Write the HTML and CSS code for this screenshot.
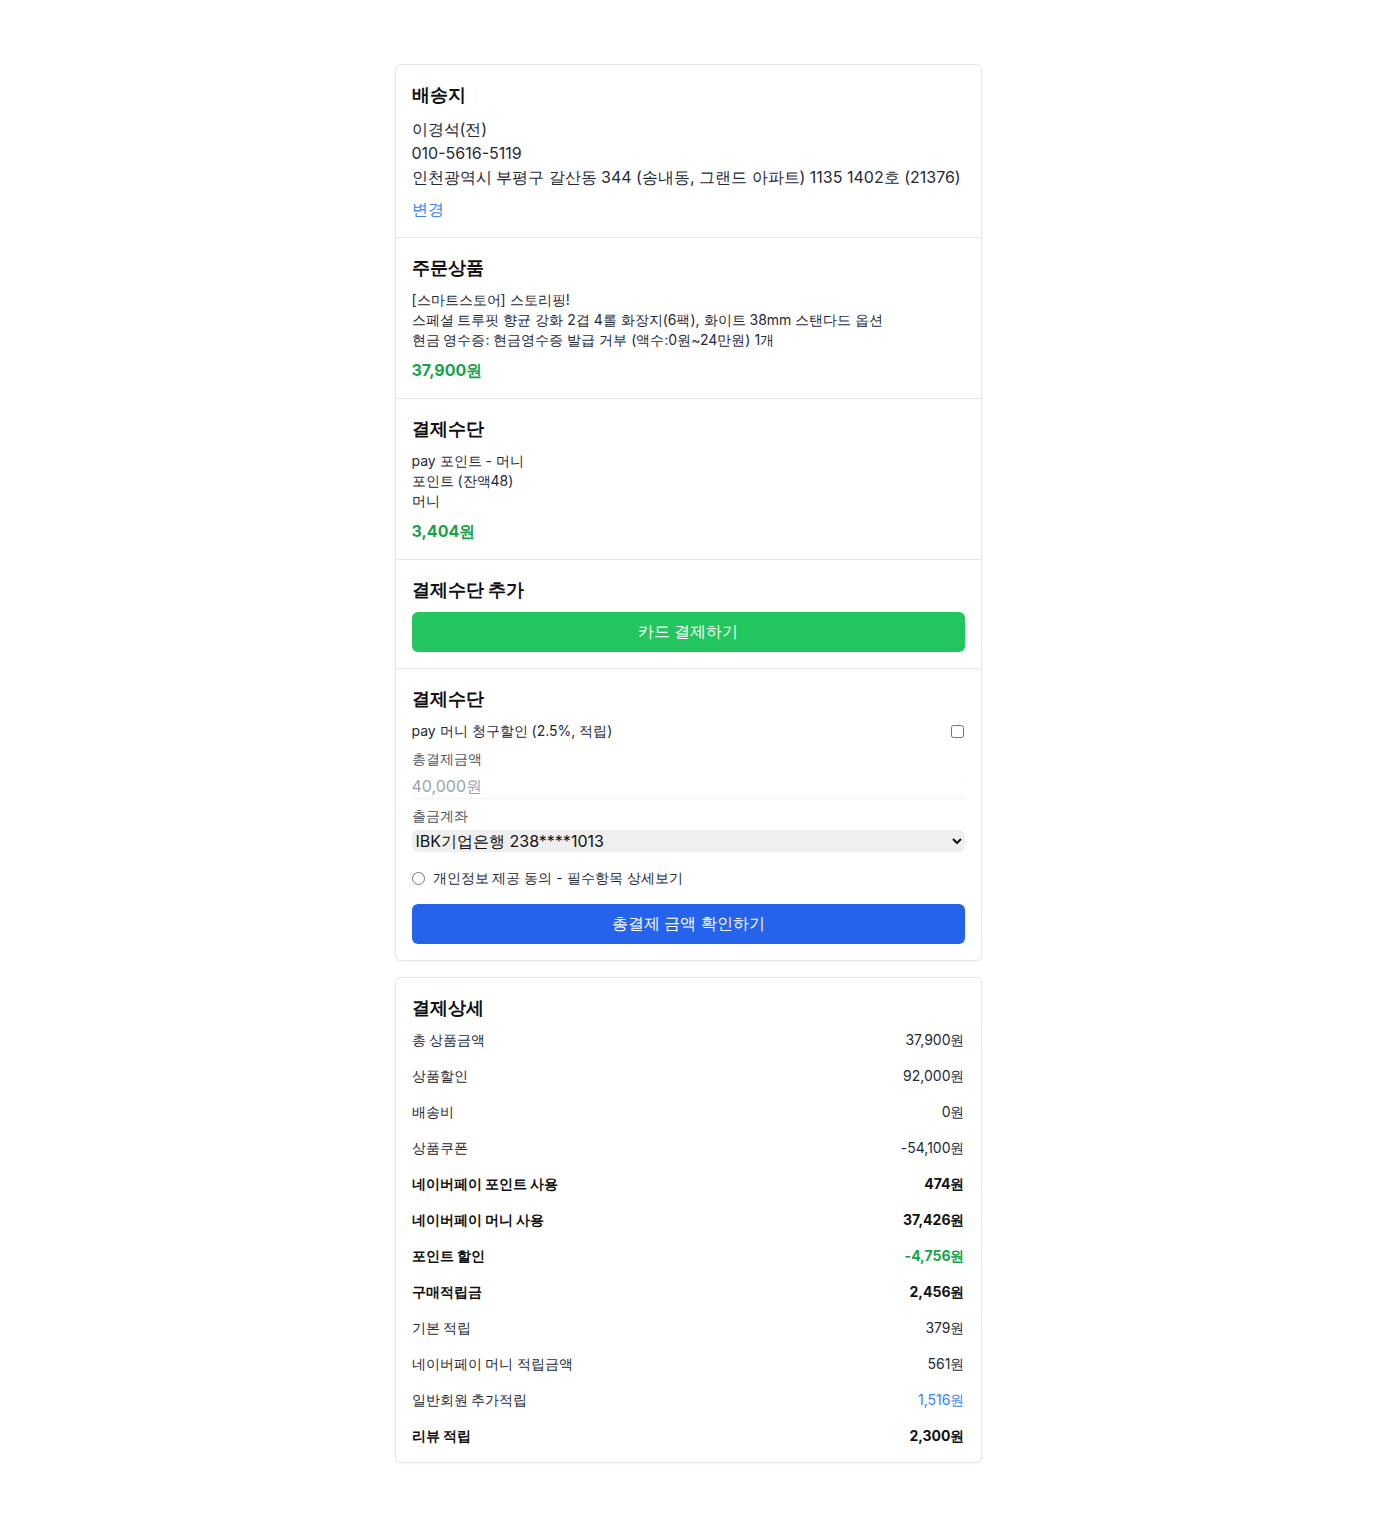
FILE: index.html
```html
<!DOCTYPE html>
<html lang="ko">
<head>
<meta charset="utf-8">
<title>주문/결제</title>
<link rel="stylesheet" href="styles.css">
</head>
<body>
<main class="page">
  <div class="card">
    <section class="sec">
      <h2 class="title">배송지</h2>
      <p class="line16">이경석(전)</p>
      <p class="line16">010-5616-5119</p>
      <p class="line16">인천광역시 부평구 갈산동 344 (송내동, 그랜드 아파트) 1135 1402호 (21376)</p>
      <a class="link">변경</a>
    </section>
    <section class="sec">
      <h2 class="title">주문상품</h2>
      <p class="line14">[스마트스토어] 스토리핑!</p>
      <p class="line14">스페셜 트루핏 향균 강화 2겹 4롤 화장지(6팩), 화이트 38mm 스탠다드 옵션</p>
      <p class="line14">현금 영수증: 현금영수증 발급 거부 (액수:0원~24만원) 1개</p>
      <p class="price">37,900원</p>
    </section>
    <section class="sec">
      <h2 class="title">결제수단</h2>
      <p class="line14">pay 포인트 - 머니</p>
      <p class="line14">포인트 (잔액48)</p>
      <p class="line14">머니</p>
      <p class="price">3,404원</p>
    </section>
    <section class="sec">
      <h2 class="title">결제수단 추가</h2>
      <button class="btn btn-green">카드 결제하기</button>
    </section>
    <section class="sec">
      <h2 class="title">결제수단</h2>
      <label class="check-row">
        <span>pay 머니 청구할인 (2.5%, 적립)</span>
        <input type="checkbox" class="chk">
      </label>
      <p class="field-label">총결제금액</p>
      <input class="amount" type="text" placeholder="40,000원">
      <p class="field-label">출금계좌</p>
      <select class="account">
        <option>IBK기업은행 238****1013</option>
      </select>
      <label class="radio-row">
        <input type="radio" class="rad">
        <span>개인정보 제공 동의 - 필수항목 상세보기</span>
      </label>
      <button class="btn btn-blue">총결제 금액 확인하기</button>
    </section>
  </div>

  <div class="card card-detail">
    <h2 class="title">결제상세</h2>
    <ul class="rows">
      <li class="row"><span>총 상품금액</span><span>37,900원</span></li>
      <li class="row"><span>상품할인</span><span>92,000원</span></li>
      <li class="row"><span>배송비</span><span>0원</span></li>
      <li class="row"><span>상품쿠폰</span><span>-54,100원</span></li>
      <li class="row bold"><span>네이버페이 포인트 사용</span><span>474원</span></li>
      <li class="row bold"><span>네이버페이 머니 사용</span><span>37,426원</span></li>
      <li class="row bold"><span>포인트 할인</span><span class="green">-4,756원</span></li>
      <li class="row bold"><span>구매적립금</span><span>2,456원</span></li>
      <li class="row"><span>기본 적립</span><span>379원</span></li>
      <li class="row"><span>네이버페이 머니 적립금액</span><span>561원</span></li>
      <li class="row"><span>일반회원 추가적립</span><span class="blue">1,516원</span></li>
      <li class="row bold"><span>리뷰 적립</span><span>2,300원</span></li>
    </ul>
  </div>
</main>
</body>
</html>
```

FILE: styles.css
```css
* { box-sizing: border-box; }
html, body { margin: 0; padding: 0; background: #fff; }
body {
  font-family: Inter, sans-serif;
  color: #111827;
}
p, h2, ul { margin: 0; padding: 0; }
.page {
  width: 587px;
  margin: 0 auto;
  padding: 64px 0;
  display: flex;
  flex-direction: column;
  gap: 16px;
}
.card {
  border: 1px solid #e5e7eb;
  border-radius: 6px;
  background: #fff;
  box-shadow: 0 1px 2px rgba(0,0,0,0.05);
}
.sec {
  padding: 16px;
  border-bottom: 1px solid #e5e7eb;
}
.sec:last-child { border-bottom: none; }
.title {
  font-size: 18px;
  line-height: 28px;
  font-weight: 700;
  margin-bottom: 8px;
  color: #111;
}
.line16 { font-size: 16px; line-height: 24px; color: #1f2937; }
.line14 { font-size: 14px; line-height: 20px; color: #1f2937; }
.link {
  display: block;
  margin-top: 8px;
  font-size: 16px;
  line-height: 24px;
  color: #3b82f6;
  cursor: pointer;
}
.price {
  margin-top: 8px;
  font-size: 16px;
  line-height: 24px;
  font-weight: 700;
  color: #16a34a;
}
.btn {
  display: block;
  width: 100%;
  height: 40px;
  border: none;
  border-radius: 6px;
  color: #fff;
  font-family: inherit;
  font-size: 16px;
  cursor: pointer;
}
.btn-green { background: #22c55e; }
.btn-blue { background: #2563eb; margin-top: 16px; }
.check-row {
  display: flex;
  justify-content: space-between;
  align-items: center;
  font-size: 14px;
  line-height: 20px;
  color: #1f2937;
}
.chk { margin: 0 1px 0 0; width: 13px; height: 13px; }
.field-label {
  margin-top: 8px;
  font-size: 14px;
  line-height: 20px;
  color: #4b5563;
}
.amount {
  display: block;
  width: 100%;
  margin-top: 4px;
  height: 25px;
  border: none;
  border-radius: 6px;
  padding: 0;
  font-family: inherit;
  font-size: 16px;
  line-height: 24px;
  box-shadow: 0 1px 2px rgba(0,0,0,0.06);
  outline: none;
}
.amount::placeholder { color: #9ca3af; }
.account {
  display: block;
  width: 100%;
  margin-top: 4px;
  height: 22px;
  border: none;
  border-radius: 6px;
  background: #efefef;
  font-family: inherit;
  font-size: 16px;
  color: #111;
  padding: 0;
}
.radio-row {
  margin-top: 16px;
  display: flex;
  align-items: center;
  gap: 8px;
  font-size: 14px;
  line-height: 20px;
  color: #1f2937;
}
.rad { margin: 0; width: 13px; height: 13px; }
.card-detail { padding: 16px; }
.rows { list-style: none; display: flex; flex-direction: column; gap: 16px; }
.row {
  display: flex;
  justify-content: space-between;
  font-size: 14px;
  line-height: 20px;
  color: #1f2937;
}
.row.bold { font-weight: 700; color: #111; }
.green { color: #16a34a; }
.blue { color: #3b82f6; }
```
